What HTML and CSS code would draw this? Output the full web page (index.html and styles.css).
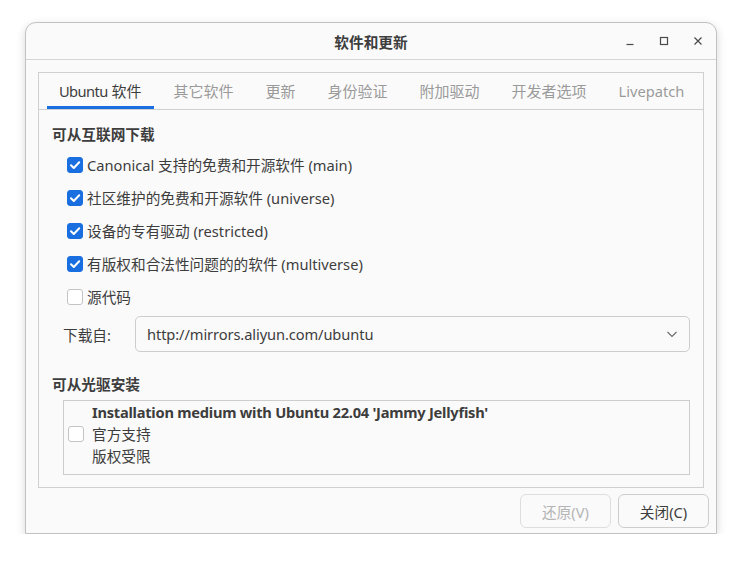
FILE: index.html
```html
<!DOCTYPE html>
<html lang="zh">
<head>
<meta charset="utf-8">
<link rel="stylesheet" href="styles.css">
</head>
<body>
<div class="window">
  <div class="titlebar">
    <div class="title">软件和更新</div>
    <div class="controls">
      <svg class="ctl" width="12" height="12" viewBox="0 0 12 12"><path d="M2.5 9.5h7" stroke="#4a4a4a" stroke-width="1.2" fill="none"/></svg>
      <svg class="ctl" width="12" height="12" viewBox="0 0 12 12"><rect x="2.5" y="2.5" width="7" height="7" stroke="#4a4a4a" stroke-width="1.2" fill="none"/></svg>
      <svg class="ctl" width="12" height="12" viewBox="0 0 12 12"><path d="M2.5 2.5l7 7M9.5 2.5l-7 7" stroke="#4a4a4a" stroke-width="1.2" fill="none"/></svg>
    </div>
  </div>
  <div class="notebook">
    <div class="tabs">
      <div class="tab active"><span class="en">Ubuntu</span> 软件</div>
      <div class="tab">其它软件</div>
      <div class="tab">更新</div>
      <div class="tab">身份验证</div>
      <div class="tab">附加驱动</div>
      <div class="tab">开发者选项</div>
      <div class="tab"><span class="en2">Livepatch</span></div>
    </div>
    <div class="page">
      <div class="heading">可从互联网下载</div>
      <div class="checks">
        <div class="row"><span class="cb on"><svg width="16" height="16" viewBox="0 0 16 16"><path d="M4 8.2l2.8 2.8L12.2 5.3" stroke="#fff" stroke-width="2" fill="none" stroke-linecap="round" stroke-linejoin="round"/></svg></span><span>Canonical 支持的免费和开源软件 (main)</span></div>
        <div class="row"><span class="cb on"><svg width="16" height="16" viewBox="0 0 16 16"><path d="M4 8.2l2.8 2.8L12.2 5.3" stroke="#fff" stroke-width="2" fill="none" stroke-linecap="round" stroke-linejoin="round"/></svg></span><span>社区维护的免费和开源软件 (universe)</span></div>
        <div class="row"><span class="cb on"><svg width="16" height="16" viewBox="0 0 16 16"><path d="M4 8.2l2.8 2.8L12.2 5.3" stroke="#fff" stroke-width="2" fill="none" stroke-linecap="round" stroke-linejoin="round"/></svg></span><span>设备的专有驱动 (restricted)</span></div>
        <div class="row"><span class="cb on"><svg width="16" height="16" viewBox="0 0 16 16"><path d="M4 8.2l2.8 2.8L12.2 5.3" stroke="#fff" stroke-width="2" fill="none" stroke-linecap="round" stroke-linejoin="round"/></svg></span><span>有版权和合法性问题的的软件 (multiverse)</span></div>
        <div class="row"><span class="cb"></span><span>源代码</span></div>
      </div>
      <div class="source">
        <span class="source-label">下载自:</span>
        <div class="combo">
          <span class="combo-text">http://mirrors.aliyun.com/ubuntu</span>
          <svg width="12" height="12" viewBox="0 0 12 12"><path d="M1.5 4l4.5 4.5L10.5 4" stroke="#6a6a6a" stroke-width="1.1" fill="none"/></svg>
        </div>
      </div>
      <div class="heading heading2">可从光驱安装</div>
      <div class="cdframe">
        <span class="cb"></span>
        <div class="cdtext">
          <div class="bold">Installation medium with Ubuntu 22.04 'Jammy Jellyfish'</div>
          <div>官方支持</div>
          <div>版权受限</div>
        </div>
      </div>
    </div>
  </div>
  <div class="footer">
    <div class="btn disabled">还原(V)</div>
    <div class="btn">关闭(C)</div>
  </div>
</div>
</body>
</html>
```

FILE: styles.css
```css
html, body {
  margin: 0;
  padding: 0;
  background: #ffffff;
}
body {
  font-family: "Noto Sans", "Noto Sans CJK SC", sans-serif;
  font-size: 14.67px;
  color: #3d3d3d;
}
.window {
  box-sizing: border-box;
  margin: 22px 0 0 25px;
  width: 692px;
  height: 512px;
  background: #fafafa;
  border: 1px solid #c2c2c2;
  border-radius: 11px 11px 0 0;
  box-shadow: 0 3px 10px rgba(0,0,0,0.16);
  display: flex;
  flex-direction: column;
}
.titlebar {
  height: 36px;
  border-bottom: 1px solid #d4d4d4;
  display: flex;
  align-items: center;
  justify-content: center;
  position: relative;
}
.title {
  font-weight: bold;
  font-size: 14.67px;
  color: #3d3d3d;
}
.controls {
  position: absolute;
  right: 12px;
  top: 12px;
  display: flex;
  gap: 22px;
}
.ctl { display: block; }
.notebook {
  box-sizing: border-box;
  margin: 12px 12px 0 12px;
  height: 416px;
  border: 1px solid #d0d0d0;
  display: flex;
  flex-direction: column;
}
.tabs {
  display: flex;
  gap: 8px;
  padding-left: 8px;
  height: 36px;
  border-bottom: 1px solid #d0d0d0;
}
.tab {
  box-sizing: border-box;
  padding: 1px 12px 0 12px;
  height: 36px;
  line-height: 34px;
  font-size: 15px;
  color: #9a9a9a;
  border-bottom: 3px solid transparent;
}
.tab .en {
  font-size: 14.67px;
  letter-spacing: -0.6px;
}
.tab .en2 {
  font-size: 14.67px;
}
.tab.active {
  color: #3d3d3d;
  border-bottom-color: #1a6fe0;
}
.page {
  padding: 14px 13px 0 13px;
}
.heading {
  font-weight: bold;
  line-height: 20px;
  height: 20px;
}
.checks {
  margin-top: 4px;
  padding-left: 15px;
}
.row {
  height: 33px;
  display: flex;
  align-items: center;
  gap: 4px;
}
.cb {
  box-sizing: border-box;
  width: 16px;
  height: 16px;
  border-radius: 3px;
  border: 1px solid #c4c4c4;
  background: #ffffff;
  flex: none;
  display: block;
}
.cb.on {
  background: #1a6fe0;
  border-color: #1a6fe0;
}
.cb.on svg {
  display: block;
  margin: -1px;
}
.source {
  margin-top: 3px;
  padding-left: 11px;
  display: flex;
  align-items: center;
}
.source-label {
  width: 72px;
}
.combo {
  box-sizing: border-box;
  flex: 1;
  height: 36px;
  border: 1px solid #cdcdcd;
  border-radius: 5px;
  background: #fafafa;
  display: flex;
  align-items: center;
  justify-content: space-between;
  padding: 0 11px 0 11px;
}
.combo-text {
  letter-spacing: -0.1px;
}
.combo svg { display: block; }
.heading2 {
  margin-top: 22px;
}
.cdframe {
  box-sizing: border-box;
  margin: 6px 0 0 11px;
  height: 75px;
  border: 1px solid #cdcdcd;
  display: flex;
  align-items: center;
  padding: 0 0 8px 4px;
  gap: 8px;
}
.cdtext div {
  line-height: 22px;
}
.bold {
  font-weight: bold;
  letter-spacing: -0.25px;
}
.footer {
  display: flex;
  justify-content: flex-end;
  gap: 7px;
  margin-top: 6px;
  padding-right: 7px;
}
.btn {
  box-sizing: border-box;
  width: 91px;
  height: 34px;
  border: 1px solid #cdcdcd;
  border-radius: 6px;
  background: #fafafa;
  display: flex;
  align-items: center;
  justify-content: center;
  color: #3d3d3d;
}
.btn.disabled {
  color: #b4b4b4;
  border-color: #dedede;
}
```
